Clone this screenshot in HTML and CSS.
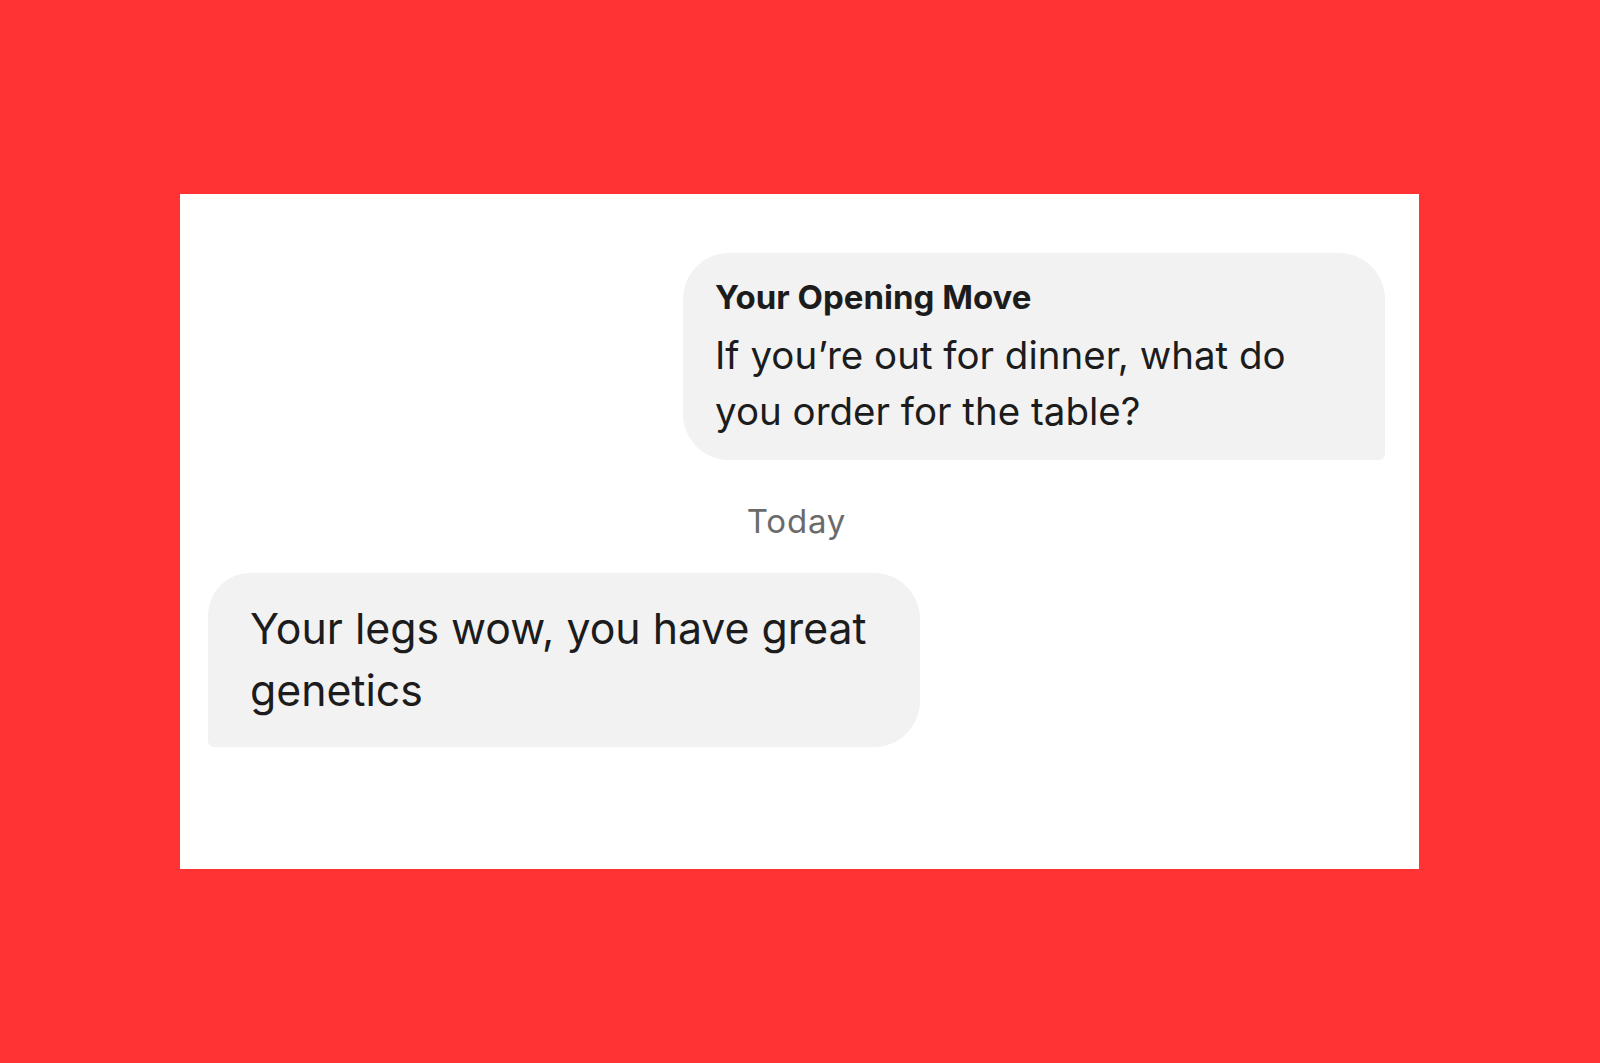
FILE: index.html
```html
<!DOCTYPE html>
<html lang="en">
<head>
<meta charset="utf-8">
<title>Opening Move</title>
<link rel="stylesheet" href="styles.css">
</head>
<body>
  <main class="card">
    <div class="bubble bubble-out">
      <div class="bubble-title">Your Opening Move</div>
      <div class="bubble-body">If you’re out for dinner, what do you order for the table?</div>
    </div>
    <div class="day">Today</div>
    <div class="bubble bubble-in">
      <div class="bubble-text">Your legs wow, you have great genetics</div>
    </div>
  </main>
</body>
</html>
```

FILE: styles.css
```css
html, body {
  margin: 0;
  padding: 0;
}

body {
  background: #ff3333;
  width: 1600px;
  height: 1063px;
  overflow: hidden;
  font-family: "Inter", "Liberation Sans", sans-serif;
  color: #1c1c1c;
}

.card {
  box-sizing: border-box;
  margin: 194px 0 0 180px;
  width: 1239px;
  height: 675px;
  background: #ffffff;
  padding: 59px 34px 0 28px;
  display: flex;
  flex-direction: column;
}

.bubble {
  box-sizing: border-box;
  background: #f2f2f2;
}

.bubble-out {
  align-self: flex-end;
  width: 702px;
  height: 207px;
  padding: 22px 60px 0 32px;
  border-radius: 46px 46px 6px 46px;
}

.bubble-title {
  font-weight: 700;
  font-size: 33px;
  line-height: 44px;
  margin-bottom: 8px;
}

.bubble-body {
  font-size: 38.5px;
  line-height: 56px;
}

.day {
  align-self: center;
  margin-top: 41px;
  font-size: 33px;
  line-height: 40px;
  letter-spacing: 0.8px;
  color: #6b6b6b;
}

.bubble-in {
  align-self: flex-start;
  margin-top: 32px;
  width: 712px;
  height: 174px;
  padding: 25px 40px 0 42px;
  border-radius: 42px 46px 46px 6px;
}

.bubble-text {
  font-size: 42.8px;
  line-height: 62px;
}
```
